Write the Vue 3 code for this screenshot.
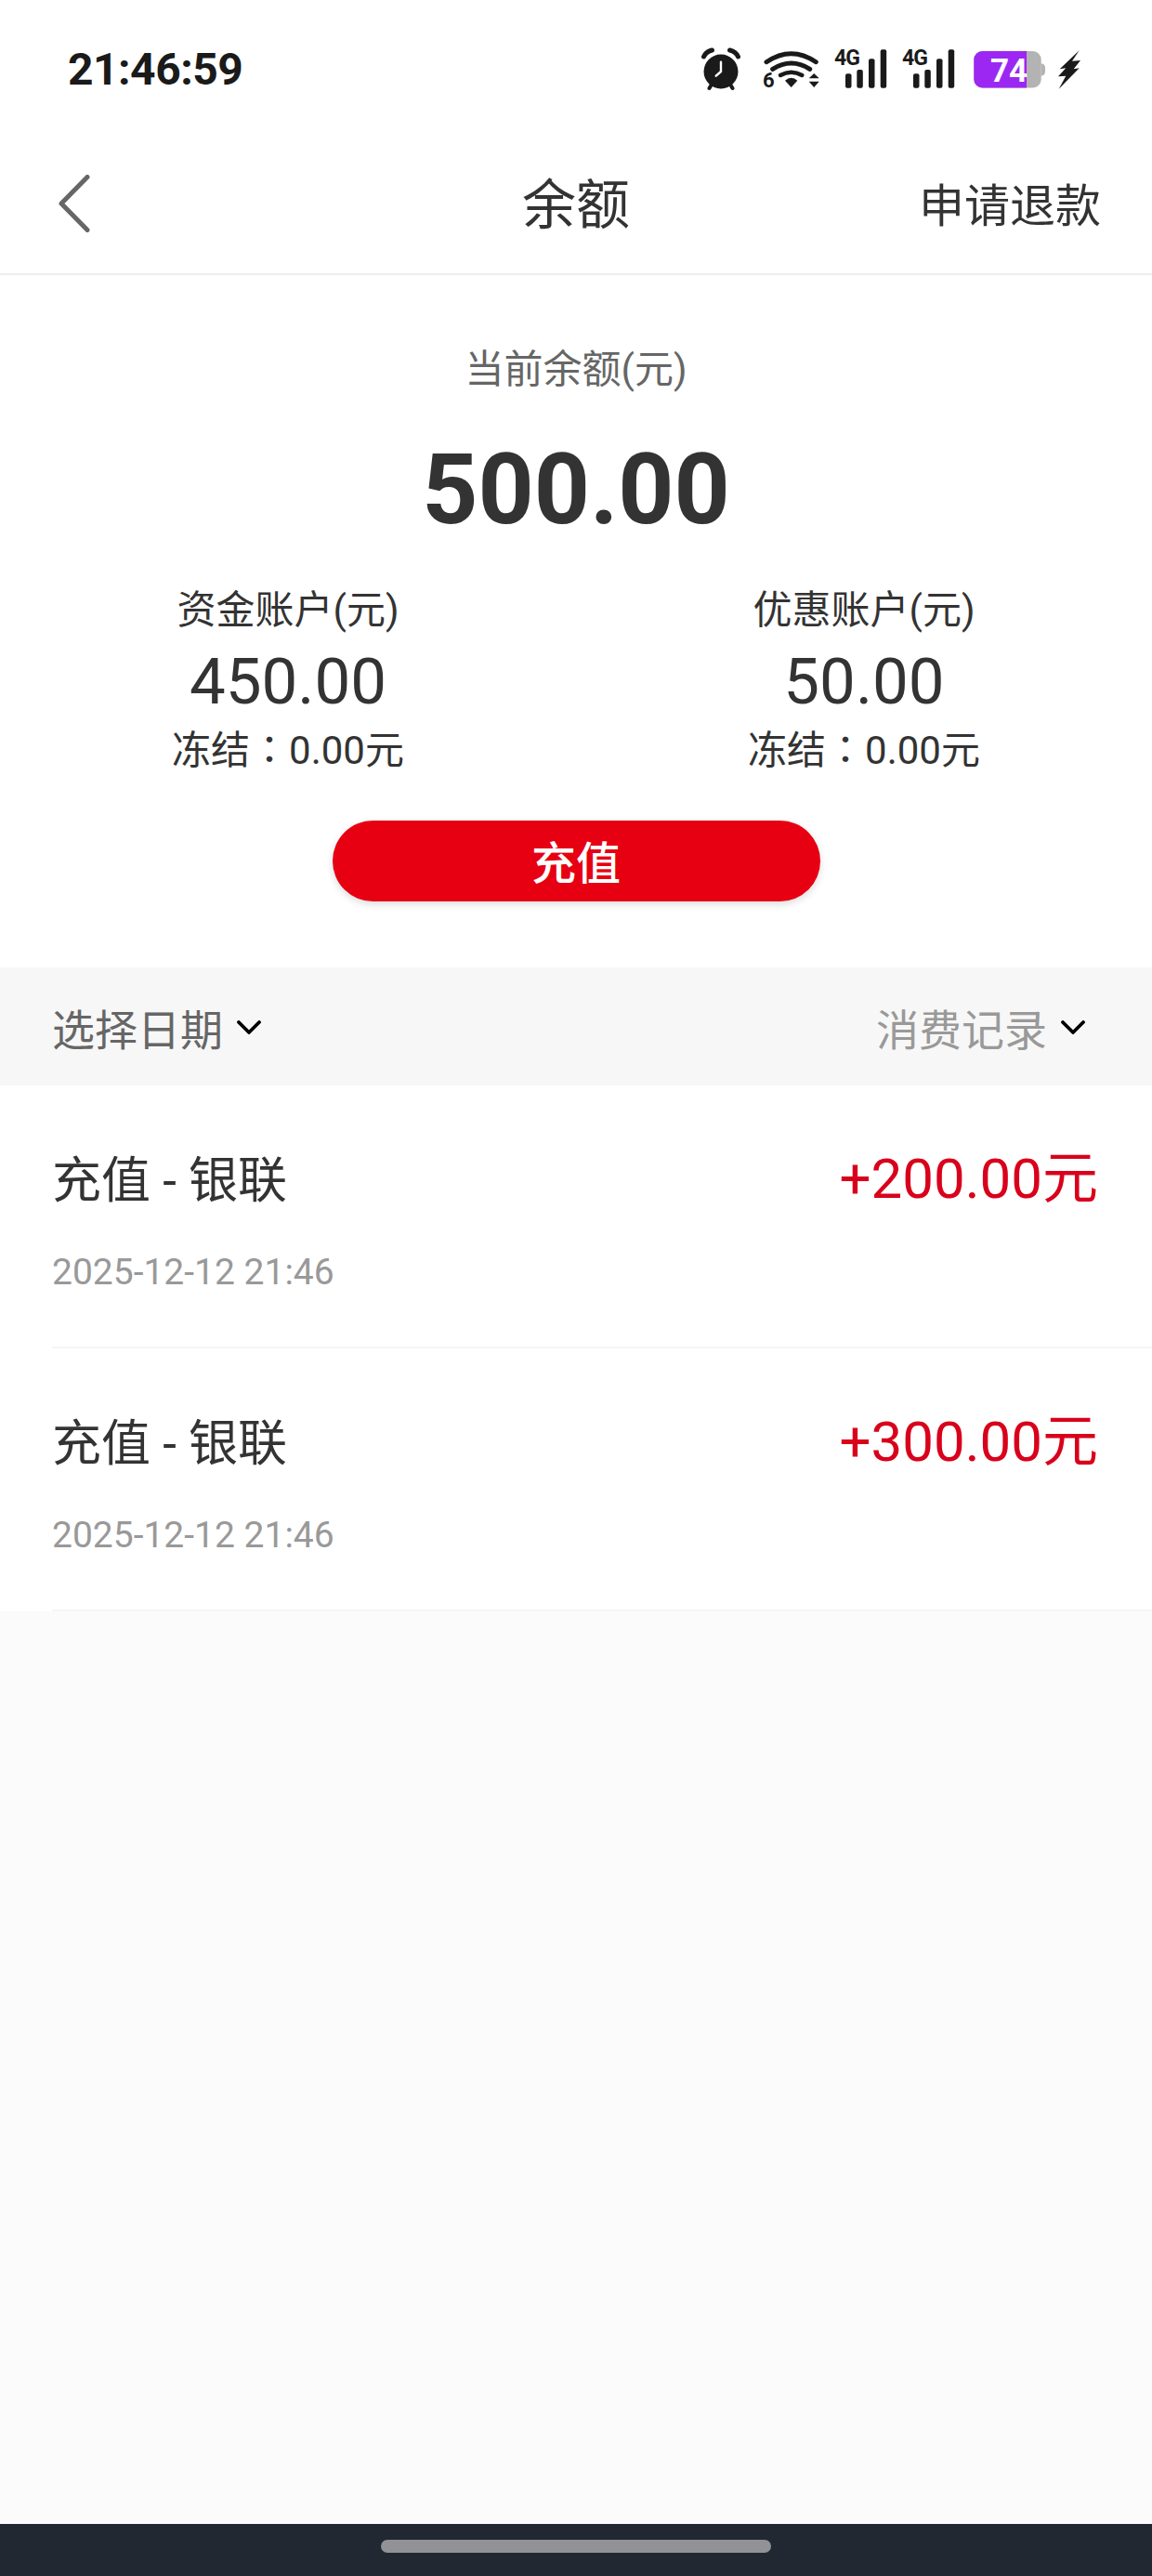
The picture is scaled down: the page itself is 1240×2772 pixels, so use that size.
<script setup>
const accounts = [
  { id: 1, label: '资金账户(元)', amount: '450.00', frozen: '0.00元' },
  { id: 2, label: '优惠账户(元)', amount: '50.00', frozen: '0.00元' },
]

const records = [
  { id: 1, title: '充值 - 银联', amount: '+200.00元', time: '2025-12-12 21:46' },
  { id: 2, title: '充值 - 银联', amount: '+300.00元', time: '2025-12-12 21:46' },
]
</script>

<template>
  <div class="page">
    <header class="status-bar">
      <span class="time">21:46:59</span>
      <div class="status-icons">
        <svg class="alarm" width="43" height="44" viewBox="0 0 43 44">
          <circle cx="21" cy="25" r="18.5" fill="#1a1a1a" />
          <path d="M2.5 9 Q5 3.5 11.5 2 M39.5 9 Q37 3.5 30.5 2" fill="none" stroke="#1a1a1a" stroke-width="5" stroke-linecap="round" />
          <path d="M11.5 38 L8.5 43 M30.5 38 L33.5 43" stroke="#1a1a1a" stroke-width="4" stroke-linecap="round" />
          <path d="M21 14.7 L21 25 L15.7 29.7" fill="none" stroke="#fff" stroke-width="2.4" stroke-linecap="round" stroke-linejoin="round" />
        </svg>
        <svg class="wifi" width="62" height="44" viewBox="0 0 62 44">
          <path d="M5 14.7 Q31.7 -3.3 58.3 14.7" fill="none" stroke="#1a1a1a" stroke-width="5" stroke-linecap="round" />
          <path d="M11.7 22.3 Q31.7 9.7 51.7 22.3" fill="none" stroke="#1a1a1a" stroke-width="5" stroke-linecap="round" />
          <path d="M20 29 Q31.7 22.4 43.3 29" fill="none" stroke="#1a1a1a" stroke-width="4.5" stroke-linecap="round" />
          <path d="M25 34.7 Q31.7 29 38.3 34.7 L31.7 42 Z" fill="#1a1a1a" />
          <text x="1" y="42" class="wifi-num">6</text>
          <path d="M56.2 27 L50.7 32.3 L61.7 32.3 Z M50.7 35.7 L61.7 35.7 L56.2 42 Z" fill="#1a1a1a" />
        </svg>
        <svg v-for="n in 2" :key="n" class="signal" width="57" height="44" viewBox="0 0 57 44">
          <text x="0" y="18" class="signal-text">4G</text>
          <rect x="12" y="27.3" width="6.5" height="15.4" rx="2" fill="#1a1a1a" />
          <rect x="24.3" y="23" width="6.5" height="19.7" rx="2" fill="#1a1a1a" />
          <rect x="37" y="11.3" width="6.5" height="31.4" rx="2" fill="#1a1a1a" />
          <rect x="49.7" y="1.3" width="6.5" height="41.4" rx="2" fill="#1a1a1a" />
        </svg>
        <svg class="battery" width="78" height="44" viewBox="0 0 78 44">
          <rect x="0.3" y="3" width="72.4" height="39.4" rx="9" fill="#b3b3b3" />
          <path d="M9.3 3 H57 V42.4 H9.3 A9 9 0 0 1 0.3 33.4 V12 A9 9 0 0 1 9.3 3 Z" fill="#9c27f2" />
          <path d="M72.7 16.3 Q77 17 77 21 V25 Q77 29 72.7 29.7 Z" fill="#b3b3b3" />
          <text x="18" y="35.7" class="battery-text">74</text>
        </svg>
        <svg class="bolt" width="26" height="44" viewBox="0 0 26 44">
          <path d="M22.7 2.3 L15 13.7 L24 13 L16.7 22.3 L22.7 21.3 L0.7 43.7 L8.3 29.7 L0 30.3 L8.3 21.3 L1.7 22.3 Z" fill="#1a1a1a" />
        </svg>
      </div>
    </header>

    <nav class="nav-bar">
      <svg class="back" width="34" height="62" viewBox="0 0 34 62">
        <path d="M31 2.5 L3 31 L31 59.5" fill="none" stroke="#666" stroke-width="5" stroke-linecap="round" stroke-linejoin="round" />
      </svg>
      <h1 class="nav-title">余额</h1>
      <span class="nav-action">申请退款</span>
    </nav>

    <section class="balance">
      <p class="balance-label">当前余额(元)</p>
      <p class="balance-total">500.00</p>
      <div class="accounts">
        <div v-for="account in accounts" :key="account.id" class="account">
          <p class="account-label">{{ account.label }}</p>
          <p class="account-amount">{{ account.amount }}</p>
          <p class="account-frozen">冻结<span class="colon">：</span>{{ account.frozen }}</p>
        </div>
      </div>
      <button class="recharge">充值</button>
    </section>

    <div class="filters">
      <div class="filter date">
        <span>选择日期</span>
        <svg width="26" height="15" viewBox="0 0 26 15">
          <path d="M2 2 L13 13 L24 2" fill="none" stroke="#000" stroke-width="3.8" stroke-linecap="round" stroke-linejoin="round" />
        </svg>
      </div>
      <div class="filter type">
        <span>消费记录</span>
        <svg width="26" height="15" viewBox="0 0 26 15">
          <path d="M2 2 L13 13 L24 2" fill="none" stroke="#000" stroke-width="3.8" stroke-linecap="round" stroke-linejoin="round" />
        </svg>
      </div>
    </div>

    <div class="records">
      <div v-for="record in records" :key="record.id" class="record">
        <div class="record-main">
          <span class="record-title">{{ record.title }}</span>
          <span class="record-amount">{{ record.amount }}</span>
        </div>
        <p class="record-time">{{ record.time }}</p>
      </div>
    </div>

    <div class="spacer"></div>

    <div class="gesture-bar">
      <div class="handle"></div>
    </div>
  </div>
</template>

<style>
html,
body {
  margin: 0;
  background: #fbfbfb;
}
</style>

<style scoped>
.page {
  display: flex;
  flex-direction: column;
  width: 1240px;
  height: 2772px;
  background: #fbfbfb;
  font-family: Roboto, "Noto Sans CJK SC", sans-serif;
  color: #333;
}

p,
h1 {
  margin: 0;
  font-weight: 400;
}

.status-bar {
  display: flex;
  justify-content: space-between;
  align-items: center;
  height: 148px;
  padding: 0 75px 0 73px;
  background: #fff;
}

.time {
  font-size: 48px;
  font-weight: 700;
  letter-spacing: -0.5px;
  color: #1a1a1a;
}

.status-icons {
  display: flex;
  align-items: center;
}

.status-icons svg {
  display: block;
  overflow: visible;
}

.status-icons .wifi {
  margin-left: 22px;
}

.status-icons .signal {
  margin-left: 16px;
}

.status-icons .battery {
  margin-left: 20px;
}

.status-icons .bolt {
  margin-left: 13px;
}

.wifi-num {
  font-size: 22px;
  font-weight: 700;
  fill: #1a1a1a;
  font-family: Roboto, sans-serif;
}

.signal-text {
  font-size: 23px;
  font-weight: 700;
  fill: #1a1a1a;
  letter-spacing: -1px;
  font-family: Roboto, sans-serif;
}

.battery-text {
  font-size: 35px;
  font-weight: 700;
  fill: #fff;
  font-family: Roboto, sans-serif;
}

.nav-bar {
  display: grid;
  grid-template-columns: 1fr auto 1fr;
  align-items: center;
  height: 146px;
  padding: 0 55px;
  background: #fff;
  border-bottom: 2px solid #eee;
}

.back {
  display: block;
  margin-left: 8px;
  margin-top: -4px;
}

.nav-title {
  font-size: 58px;
  line-height: 80px;
}

.nav-action {
  justify-self: end;
  margin-bottom: 7px;
  font-size: 49px;
}

.balance {
  display: flex;
  flex-direction: column;
  align-items: center;
  padding: 72px 0 71px;
  background: #fff;
  text-align: center;
}

.balance-label {
  font-size: 42px;
  line-height: 60px;
  color: #666;
}

.balance-total {
  margin-top: 40px;
  font-size: 105px;
  line-height: 120px;
  font-weight: 700;
}

.accounts {
  display: flex;
  width: 100%;
  margin-top: 39px;
}

.account {
  flex: 1;
}

.account-label {
  font-size: 42px;
  line-height: 60px;
}

.account-amount {
  margin-top: 7px;
  font-size: 69px;
  line-height: 80px;
}

.account-frozen {
  margin-top: 6px;
  font-size: 42px;
  line-height: 56px;
}

.colon {
  font-family: "Noto Sans CJK TC", sans-serif;
  line-height: 1;
}

.recharge {
  width: 525px;
  height: 87px;
  margin-top: 47px;
  padding: 0 0 4px;
  border: none;
  border-radius: 44px;
  background: #e60012;
  box-shadow: 0 3px 8px rgba(0, 0, 0, 0.14);
  color: #fff;
  font-family: inherit;
  font-size: 48px;
  font-weight: 500;
}

.filters {
  display: flex;
  justify-content: space-between;
  align-items: center;
  height: 127px;
  padding: 0 72px 0 56px;
  background: #f7f7f7;
}

.filter {
  display: flex;
  align-items: center;
  gap: 15px;
  font-size: 46px;
}

.filter svg {
  margin-top: 2px;
}

.filter.date {
  color: #666;
}

.filter.type {
  color: #999;
}

.records {
  background: #fff;
}

.record {
  box-sizing: border-box;
  height: 283px;
  margin-left: 56px;
  padding: 61px 58px 0 0;
  border-bottom: 2px solid #f5f5f5;
}

.record-main {
  display: flex;
  justify-content: space-between;
  align-items: center;
  height: 70px;
}

.record-title {
  margin-top: 3px;
  font-size: 53px;
  color: #333;
}

.record-amount {
  margin-bottom: 4px;
  font-size: 60px;
  color: #d9001b;
}

.record-time {
  margin-top: 45px;
  font-size: 39px;
  line-height: 50px;
  color: #999;
}

.spacer {
  flex: 1;
}

.gesture-bar {
  display: flex;
  justify-content: center;
  box-sizing: border-box;
  height: 56px;
  padding-top: 17px;
  background: #222831;
}

.handle {
  width: 420px;
  height: 14px;
  border-radius: 7px;
  background: #909296;
}
</style>
